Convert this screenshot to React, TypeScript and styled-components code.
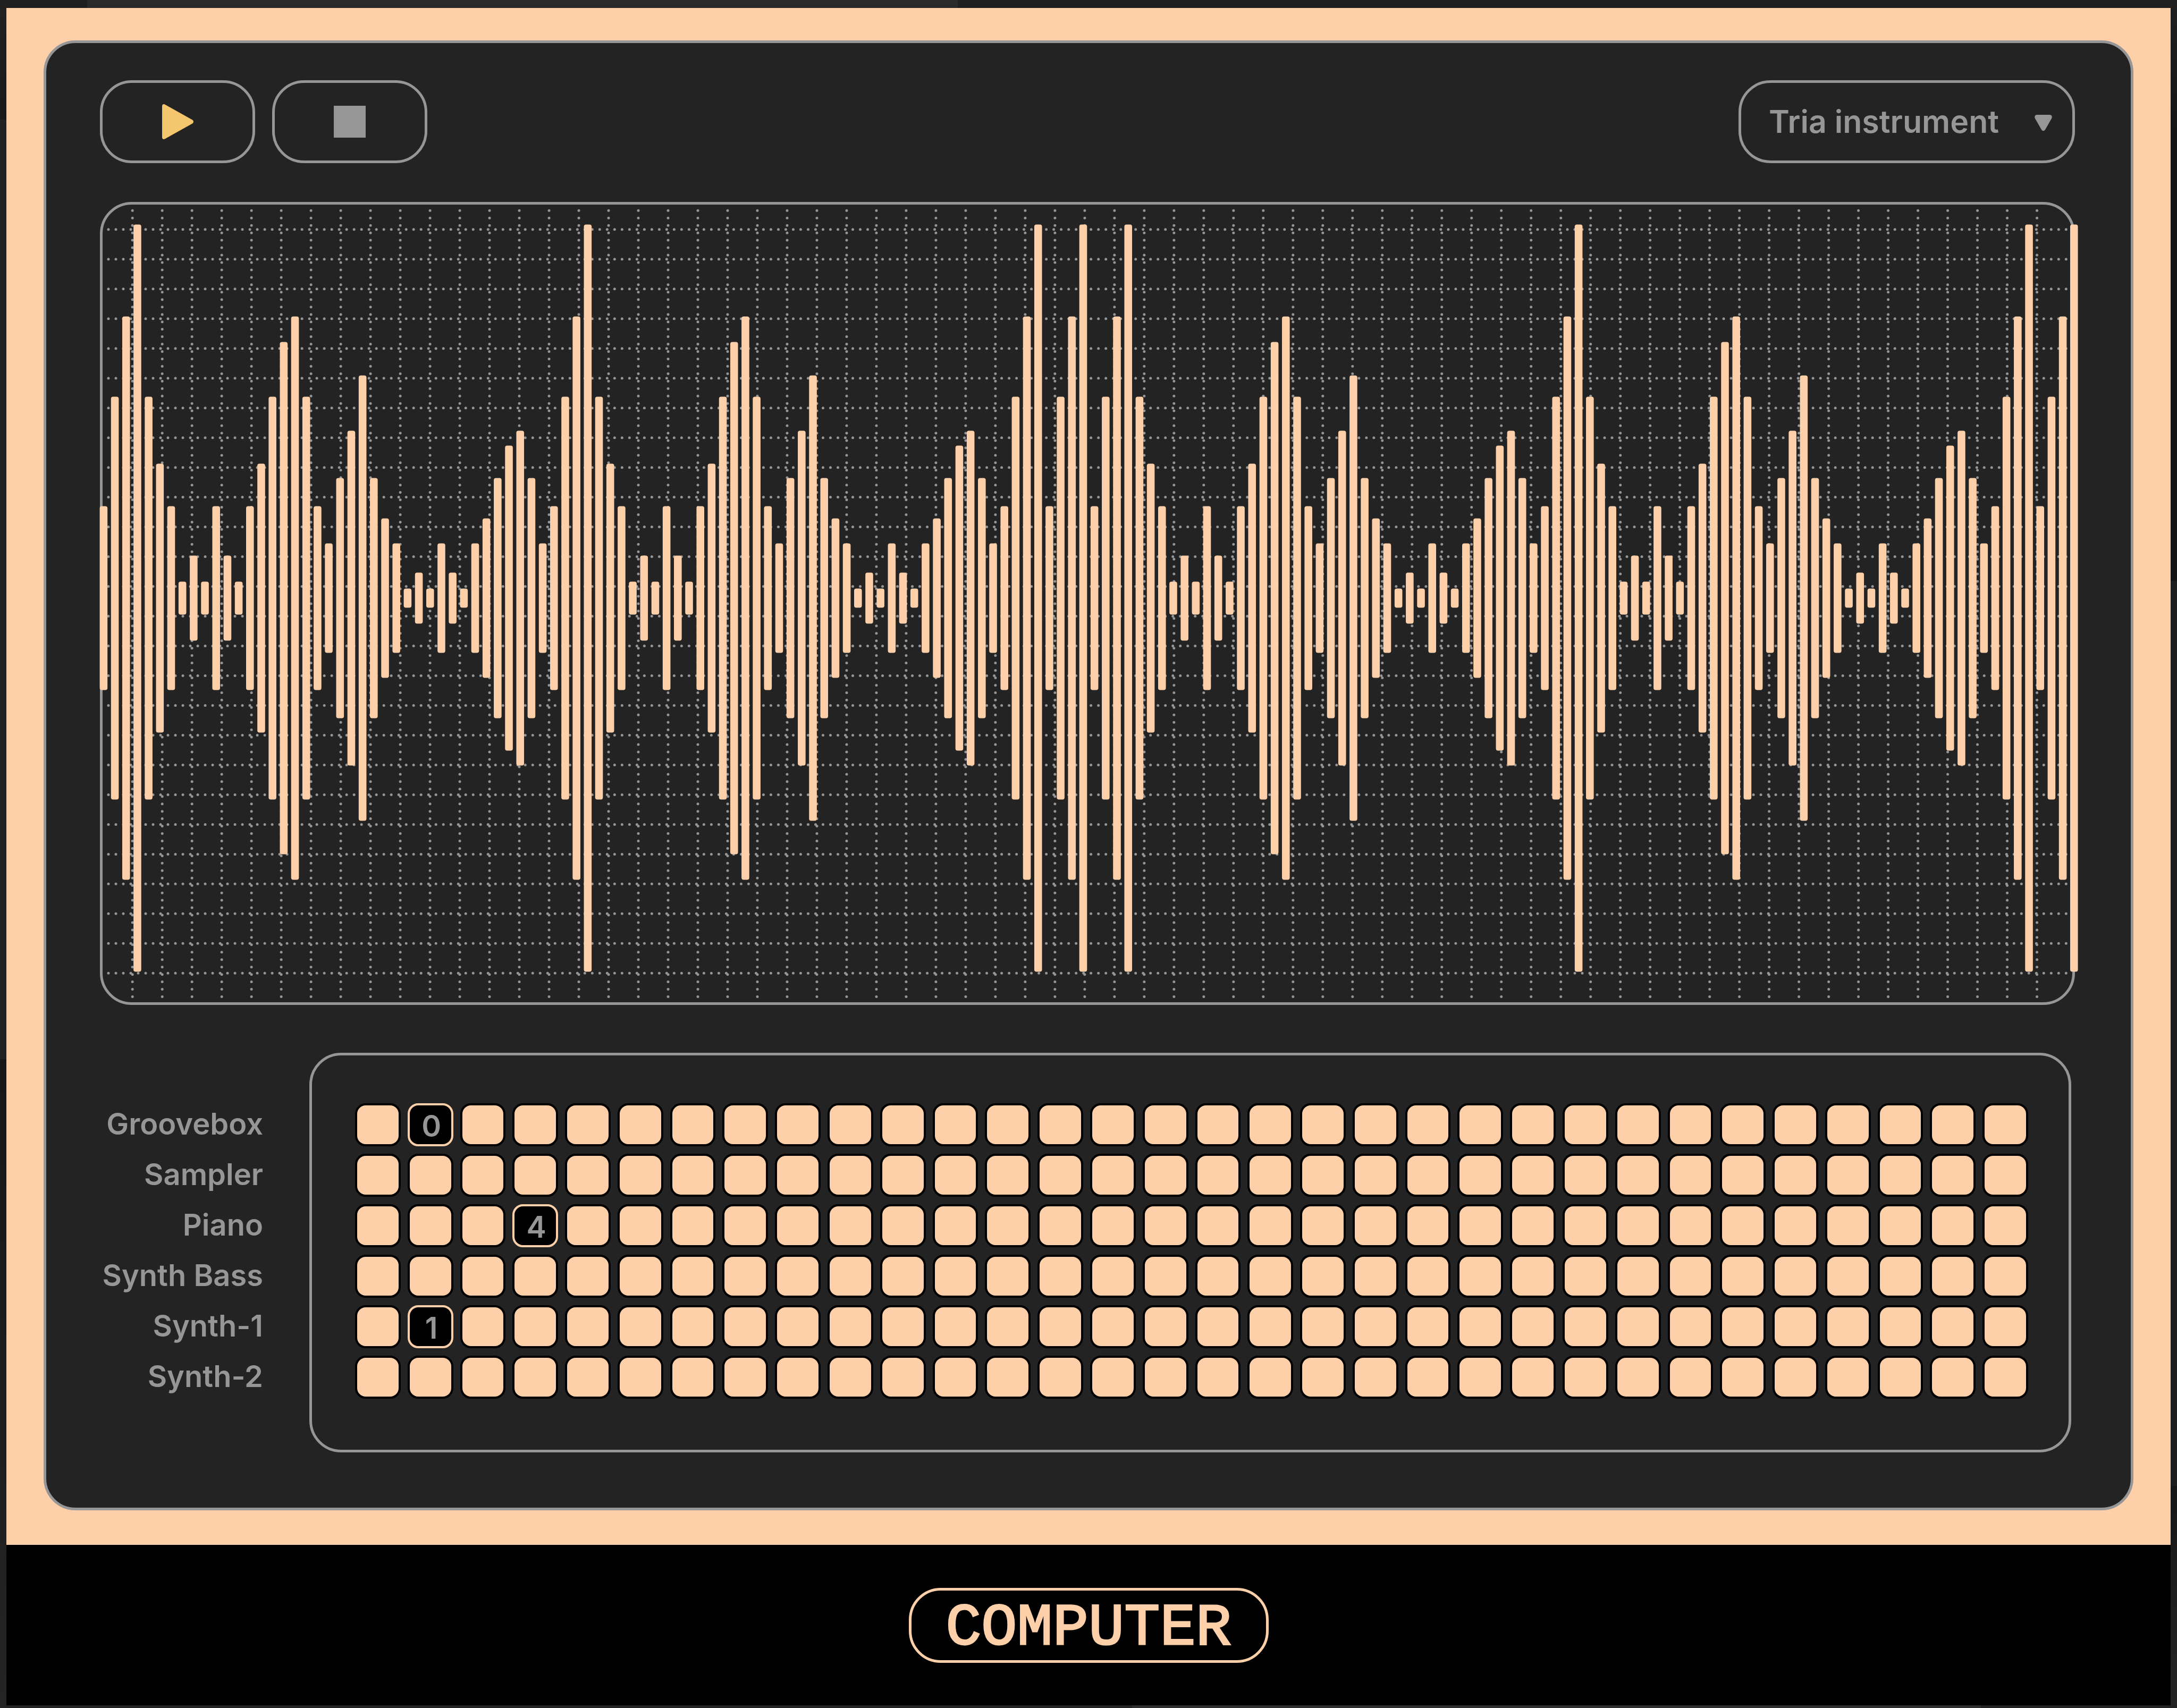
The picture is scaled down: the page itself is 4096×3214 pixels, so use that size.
import React, { useState } from 'react';
import styled, { createGlobalStyle } from 'styled-components';

const color = {
  peach: '#fed0a9',
  line: '#969696',
  panel: '#232323',
  ink: '#000000',
  play: '#f4c66e',
};

const GlobalStyle = createGlobalStyle`
  *, *::before, *::after { box-sizing: border-box; }
  body { margin: 0; background: #202020; }
  button, select { font: inherit; color: inherit; margin: 0; }
`;

const Page = styled.div`
  padding: 15px 12px 5px;
  background:
    linear-gradient(90deg, #202020 4%, #2a2a2a 4% 44%, #202020 44%) top / 100% 15px no-repeat,
    linear-gradient(90deg, #242424 52%, #2e2e2e 52% 91%, #222222 91%) bottom / 100% 5px no-repeat,
    linear-gradient(180deg, #222222, #191919 7%, #222222 7% 62%, #171717 62%, #242424) left / 12px 100% no-repeat,
    linear-gradient(180deg, #202020, #141414 8% 34%, #1d1d1d 34% 87%, #161616 87%, #242424) right / 12px 100% no-repeat;
  font-family: Inter, 'Open Sans', sans-serif;
  font-size: 56px;
  font-weight: 600;
  line-height: 80px;
  color: ${color.line};
`;

const Bezel = styled.main`
  padding: 61px 70px 65px;
  background: ${color.peach};
`;

const Panel = styled.section`
  padding: 70px 105px 104px 101px;
  border: 5px solid ${color.line};
  border-radius: 60px;
  background: ${color.panel};
`;

const Toolbar = styled.div`
  display: flex;
  gap: 32px;
  margin-bottom: 73px;
`;

const TransportButton = styled.button`
  display: flex;
  align-items: center;
  justify-content: center;
  width: 292px;
  height: 156px;
  padding: 0;
  border: 5px solid ${color.line};
  border-radius: 60px;
  background: none;
  cursor: pointer;
`;

const SelectBox = styled.div`
  position: relative;
  width: 633px;
  margin-left: auto;
`;

const InstrumentSelect = styled.select`
  appearance: none;
  width: 100%;
  height: 156px;
  padding: 0 100px 0 52px;
  border: 5px solid ${color.line};
  border-radius: 60px;
  background: none;
  font-size: 59px;
  cursor: pointer;

  option { background: ${color.panel}; }
`;

const SelectArrow = styled.svg`
  position: absolute;
  top: 65px;
  right: 43px;
  pointer-events: none;
`;

const Scope = styled.div`
  margin-bottom: 90px;
  border: 5px solid ${color.line};
  border-radius: 60px;
`;

const ScopeDrawing = styled.svg`
  display: block;
  width: 100%;
  height: auto;
  overflow: visible;
`;

const Sequencer = styled.div`
  display: flex;
  gap: 87px;
  padding-right: 7px;
`;

const TrackNames = styled.div`
  display: flex;
  flex-direction: column;
  align-items: flex-end;
  gap: 15px;
  width: 307px;
  padding-top: 94px;
  white-space: nowrap;
`;

const TrackName = styled.div`
  height: 80px;
`;

const StepBoard = styled.div`
  display: flex;
  flex: 1;
  flex-direction: column;
  gap: 14px;
  padding: 90px 76px 96px 81px;
  border: 5px solid ${color.line};
  border-radius: 60px;
`;

const StepRow = styled.div`
  display: grid;
  grid-template-columns: repeat(32, minmax(0, 1fr));
  gap: 13px;
`;

const Step = styled.button<{ $on: boolean }>`
  display: flex;
  align-items: center;
  justify-content: center;
  height: 81px;
  padding: 4px 0 0 4px;
  border: 4px solid ${(p) => (p.$on ? color.peach : color.ink)};
  border-radius: 20px;
  background: ${(p) => (p.$on ? color.ink : color.peach)};
  cursor: pointer;
`;

const Footer = styled.footer`
  display: flex;
  justify-content: center;
  padding: 81px 0 80px;
  background: ${color.ink};
`;

const NamePlate = styled.div`
  display: flex;
  align-items: center;
  justify-content: center;
  width: 677px;
  height: 141px;
  padding-top: 12px;
  border: 5px solid ${color.peach};
  border-radius: 60px;
  font-family: 'Liberation Mono', monospace;
  font-size: 112px;
  font-weight: 400;
  line-height: 112px;
  color: ${color.peach};
  -webkit-text-stroke: 3px ${color.peach};
`;

// Half height of each bar size, measured from the centre line.
const barSize: Record<string, number> = {
  A: 173, B: 18, C: 31, D: 48, E: 80, F: 103, G: 150, H: 226,
  I: 253, J: 287, K: 315, L: 379, M: 419, N: 482, O: 530, P: 703,
};

const loop = 'ALOPLIACECAECAILNOLAFHKMHGFBDBFDBFGHJKHF';
const hit = 'ALOP';
const bars = (loop + loop + hit + hit + loop + loop + hit + hit).split('');

const columns = Array.from({ length: 65 }, (_, i) => 56.2 + i * 55.99);
const rows = Array.from({ length: 26 }, (_, i) => 46.8 + i * 55.98);

function Waveform() {
  return (
    <ScopeDrawing viewBox="0 0 3706 1501" role="img" aria-label="Waveform">
      <g stroke={color.line} strokeWidth={5} strokeLinecap="round">
        {columns.map((x) => (
          <line key={x} x1={x} x2={x} y1={11.3} y2={1492} strokeDasharray="0 13.955" />
        ))}
        {rows.map((y) => (
          <line key={y} x1={11} x2={3698} y1={y} y2={y} strokeDasharray="0 14.005" />
        ))}
      </g>
      <g fill={color.peach}>
        {bars.map((size, i) => (
          <rect
            key={i}
            x={-5.4 + i * 21.185}
            y={740.5 - barSize[size]}
            width={14.6}
            height={barSize[size] * 2}
            rx={4}
          />
        ))}
      </g>
    </ScopeDrawing>
  );
}

const tracks = ['Groovebox', 'Sampler', 'Piano', 'Synth Bass', 'Synth-1', 'Synth-2'];
const instruments = ['Tria instrument', ...tracks];

export default function App() {
  const [steps, setSteps] = useState<Record<string, number>>({ '0-1': 0, '2-3': 4, '4-1': 1 });

  const toggle = (key: string) =>
    setSteps((current) => {
      const next = { ...current };
      if (key in next) delete next[key];
      else next[key] = 0;
      return next;
    });

  return (
    <>
      <GlobalStyle />
      <Page>
        <Bezel>
          <Panel>
            <Toolbar>
              <TransportButton type="button" aria-label="Play">
                <svg width="60" height="68" viewBox="0 0 60 68">
                  <path
                    d="M1 5C1 1 4 0 7 2L57 30C61 32 61 36 57 38L7 66C4 68 1 67 1 63Z"
                    fill={color.play}
                  />
                </svg>
              </TransportButton>
              <TransportButton type="button" aria-label="Stop">
                <svg width="60" height="60" viewBox="0 0 60 60">
                  <rect width="60" height="60" fill={color.line} />
                </svg>
              </TransportButton>
              <SelectBox>
                <InstrumentSelect aria-label="Instrument">
                  {instruments.map((name) => (
                    <option key={name}>{name}</option>
                  ))}
                </InstrumentSelect>
                <SelectArrow width="33" height="31" viewBox="0 0 33 31">
                  <path
                    d="M5 0H28C32 0 34 3 32 7L20 28C18 31 15 31 13 28L1 7C-1 3 1 0 5 0Z"
                    fill={color.line}
                  />
                </SelectArrow>
              </SelectBox>
            </Toolbar>
            <Scope>
              <Waveform />
            </Scope>
            <Sequencer>
              <TrackNames>
                {tracks.map((name) => (
                  <TrackName key={name}>{name}</TrackName>
                ))}
              </TrackNames>
              <StepBoard>
                {tracks.map((name, row) => (
                  <StepRow key={name} role="group" aria-label={name}>
                    {Array.from({ length: 32 }, (_, col) => {
                      const key = `${row}-${col}`;
                      const on = key in steps;
                      return (
                        <Step
                          key={key}
                          type="button"
                          $on={on}
                          aria-pressed={on}
                          aria-label={`${name} step ${col + 1}`}
                          onClick={() => toggle(key)}
                        >
                          {on ? steps[key] : null}
                        </Step>
                      );
                    })}
                  </StepRow>
                ))}
              </StepBoard>
            </Sequencer>
          </Panel>
        </Bezel>
        <Footer>
          <NamePlate>COMPUTER</NamePlate>
        </Footer>
      </Page>
    </>
  );
}
